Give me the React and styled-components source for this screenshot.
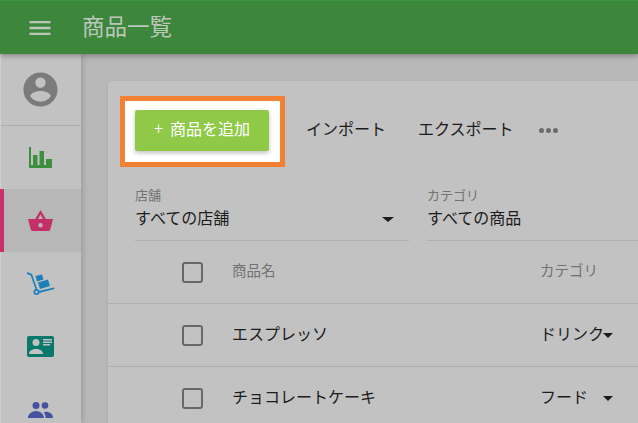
import React from 'react'
import styled, { createGlobalStyle } from 'styled-components'

const Global = createGlobalStyle`
    html, body {
        margin: 0;
        padding: 0;
        overflow: hidden;
    }
    body {
        font-family: Roboto, "Noto Sans CJK JP", sans-serif;
        color: #1c1c1c;
    }
`

const Frame = styled.div`
    width: 638px;
    height: 423px;
    display: flex;
    flex-direction: column;
    overflow: hidden;
    background: #b8b8b8;
`

const Header = styled.header`
    height: 54px;
    flex: none;
    display: flex;
    align-items: center;
    background: #3c873c;
    border-top: 1px solid #3a953c;
    box-sizing: border-box;
    padding-left: 26px;
    gap: 28px;
    box-shadow: 0 2px 5px rgba(0, 0, 0, 0.3);
    position: relative;
    z-index: 2;
`

const Title = styled.h1`
    margin: 0;
    padding-bottom: 5px;
    font-size: 22.5px;
    font-weight: 400;
    color: #bcc7bc;
`

const Body = styled.div`
    flex: 1;
    display: flex;
    min-height: 0;
`

const Sidebar = styled.nav`
    width: 81px;
    flex: none;
    background: #c2c2c2;
    border-left: 1px solid #cfcfcf;
    box-sizing: border-box;
    box-shadow: 2px 0 5px rgba(0, 0, 0, 0.15);
    position: relative;
    z-index: 1;
`

const Profile = styled.div`
    height: 72px;
    display: flex;
    align-items: center;
    justify-content: center;
    border-bottom: 1px solid #aeaeae;
    box-sizing: border-box;
    padding-right: 1px;
`

const NavItem = styled.div`
    height: 63px;
    display: flex;
    align-items: center;
    justify-content: center;
    background: ${(props) => (props.$active ? '#b7b7b7' : 'transparent')};
    border-left: 4px solid ${(props) => (props.$active ? '#c8316b' : 'transparent')};
    margin-left: -1px;
    padding-right: 4px;
`

const Main = styled.main`
    flex: 1;
    min-width: 0;
    padding: 27px 0 0 27px;
    overflow: hidden;
`

const Card = styled.section`
    width: 600px;
    background: #c2c2c2;
    border-radius: 4px 0 0 0;
    box-shadow: 0 1px 3px rgba(0, 0, 0, 0.12);
`

const Toolbar = styled.div`
    display: flex;
    align-items: center;
    padding: 15px 0 0 12px;
`

const Highlight = styled.div`
    width: 165px;
    height: 71px;
    box-sizing: border-box;
    border: 5px solid #f38133;
    background: #fff;
    padding: 9px 11px 11px 10px;
    margin-right: 21px;
`

const AddButton = styled.button`
    width: 100%;
    height: 41px;
    display: flex;
    align-items: center;
    justify-content: center;
    border: none;
    border-radius: 2px;
    background: #8fc947;
    color: #fff;
    font-family: inherit;
    font-size: 16px;
    padding: 0 0 5px 0;
    box-shadow: 0 2px 4px rgba(0, 0, 0, 0.25);
`

const Plus = styled.span`
    margin-right: 7px;
    font-weight: 300;
`

const TextAction = styled.span`
    font-size: 16px;
    margin-right: 32px;
    padding-bottom: 8px;
`

const Dots = styled.span`
    display: flex;
    gap: 2px;
    margin-left: -7px;
    padding-bottom: 2px;
`

const Dot = styled.i`
    width: 5px;
    height: 5px;
    border-radius: 50%;
    background: #6b6b6b;
`

const Filters = styled.div`
    display: flex;
    gap: 18px;
    padding: 21px 0 0 27px;
`

const Filter = styled.div`
    width: ${(props) => props.$width}px;
    height: 53px;
    box-sizing: border-box;
    border-bottom: 1px solid #aeaeae;
    position: relative;
    flex: none;
`

const FilterLabel = styled.div`
    font-size: 13px;
    line-height: 16px;
    color: #727272;
`

const FilterValue = styled.div`
    font-size: 16px;
    line-height: 22px;
    margin-top: 4px;
`

const Caret = styled.span`
    flex: none;
    width: 0;
    height: 0;
    border-left: 5px solid transparent;
    border-right: 5px solid transparent;
    border-top: 5px solid #1c1c1c;
`

const FilterCaret = styled(Caret)`
    position: absolute;
    right: 15px;
    top: 29px;
    border-left-width: 6px;
    border-right-width: 6px;
`

const Row = styled.div`
    height: ${(props) => props.$height}px;
    display: grid;
    grid-template-columns: 124px 308px 1fr;
    align-items: center;
    box-sizing: border-box;
    border-bottom: 1px solid #aeaeae;
`

const CheckCell = styled.div`
    display: flex;
    justify-content: flex-end;
    padding-right: 29px;
`

const Check = styled.span`
    width: 21px;
    height: 21px;
    box-sizing: border-box;
    border: 2px solid #686868;
    border-radius: 3px;
`

const HeadCell = styled.div`
    font-size: 14.5px;
    color: #727272;
    padding-bottom: 6px;
`

const Name = styled.div`
    font-size: 16px;
    padding-bottom: 5px;
`

const Category = styled.div`
    width: 73px;
    display: flex;
    align-items: center;
    justify-content: space-between;
    font-size: 16px;
`

const CategoryText = styled.span`
    min-width: 0;
    white-space: nowrap;
    padding-bottom: 4px;
`

const Icon = styled.svg`
    display: block;
`

const products = [
    { name: 'エスプレッソ', category: 'ドリンク' },
    { name: 'チョコレートケーキ', category: 'フード' },
]

const Menu = () => (
    <Icon width="28" height="28" viewBox="0 0 24 24" fill="#bcc7bc">
        <path d="M3 18h18v-2H3v2zm0-5h18v-2H3v2zm0-7v2h18V6H3z" />
    </Icon>
)

const Account = () => (
    <Icon width="41" height="41" viewBox="0 0 24 24" fill="#7b7b7b">
        <path d="M12 2C6.48 2 2 6.48 2 12s4.48 10 10 10 10-4.48 10-10S17.52 2 12 2zm0 3c1.66 0 3 1.34 3 3s-1.34 3-3 3-3-1.34-3-3 1.34-3 3-3zm0 14.2c-2.5 0-4.71-1.28-6-3.22.03-1.99 4-3.08 6-3.08 1.99 0 5.97 1.09 6 3.08-1.29 1.94-3.5 3.22-6 3.22z" />
    </Icon>
)

const Chart = () => (
    <Icon width="23" height="21" viewBox="0 0 23 21" fill="#3d8f40">
        <path d="M0 0h2v18h2V8h4.500v10h2V4H15v14h2v-6h6v9H0z" />
    </Icon>
)

const Basket = () => (
    <Icon width="25" height="21" viewBox="0 0 25 21" fill="#c2306a">
        <path fillRule="evenodd" d="M12.500 0l5.300 9H25l-2.700 10.500c-.2.900-1 1.500-1.900 1.500H4.600c-.9 0-1.700-.6-1.900-1.500L0 9h7.200zM10 9h5l-2.500-4.500zM12.500 13a2.200 2.200 0 1 0 0 4.400 2.200 2.200 0 0 0 0-4.400z" />
    </Icon>
)

const Dolly = () => (
    <Icon width="28" height="23" viewBox="0 0 28 23" fill="#1c80b8">
        <path d="M0 0l5 2 5.500 16-1.500.6L3.700 3.500 0 2z" />
        <path d="M8.500 4L15 2.500l1.500 5L10 9.500zM11 10.500l10-3 2 6.500-10 3z" />
        <path d="M11.500 19L27 15.500l.5 1.500L12 21z" />
        <path fillRule="evenodd" d="M9.500 17a3 3 0 1 0 0 6 3 3 0 0 0 0-6zm0 1.700a1.300 1.300 0 1 1 0 2.600 1.300 1.300 0 0 1 0-2.600z" />
    </Icon>
)

const IdCard = () => (
    <Icon width="27" height="21" viewBox="0 0 27 21">
        <rect width="27" height="21" rx="2" fill="#08796b" />
        <circle cx="9" cy="6.500" r="3.500" fill="#c2c2c2" />
        <path d="M2 18c0-3.500 3.600-5 7-5s7 1.500 7 5z" fill="#c2c2c2" />
        <path d="M16 3h9v1.500h-9zM16 5.500h9V7h-9zM16 8h7v1.500h-7z" fill="#c2c2c2" />
    </Icon>
)

const People = () => (
    <Icon width="25" height="16" viewBox="0 0 25 16" fill="#44529f">
        <circle cx="8" cy="3.500" r="3.500" />
        <circle cx="17" cy="3.500" r="3.300" />
        <path d="M0 16c0-4 4-7 8-7s8 3 8 7zM17.500 16c0-2.500-.6-4.300-1.800-5.800 3.500-1.600 9.300.5 9.300 5.800z" />
    </Icon>
)

const App = () => {
    return (
        <Frame>
            <Global />
            <Header>
                <Menu />
                <Title>商品一覧</Title>
            </Header>
            <Body>
                <Sidebar>
                    <Profile><Account /></Profile>
                    <NavItem><Chart /></NavItem>
                    <NavItem $active><Basket /></NavItem>
                    <NavItem><Dolly /></NavItem>
                    <NavItem><IdCard /></NavItem>
                    <NavItem><People /></NavItem>
                </Sidebar>
                <Main>
                    <Card>
                        <Toolbar>
                            <Highlight>
                                <AddButton><Plus>+</Plus>商品を追加</AddButton>
                            </Highlight>
                            <TextAction>インポート</TextAction>
                            <TextAction>エクスポート</TextAction>
                            <Dots><Dot /><Dot /><Dot /></Dots>
                        </Toolbar>
                        <Filters>
                            <Filter $width={274}>
                                <FilterLabel>店舗</FilterLabel>
                                <FilterValue>すべての店舗</FilterValue>
                                <FilterCaret />
                            </Filter>
                            <Filter $width={260}>
                                <FilterLabel>カテゴリ</FilterLabel>
                                <FilterValue>すべての商品</FilterValue>
                            </Filter>
                        </Filters>
                        <Row $height={63}>
                            <CheckCell><Check /></CheckCell>
                            <HeadCell>商品名</HeadCell>
                            <HeadCell>カテゴリ</HeadCell>
                        </Row>
                        {products.map((p) => (
                            <Row key={p.name} $height={63}>
                                <CheckCell><Check /></CheckCell>
                                <Name>{p.name}</Name>
                                <Category>
                                    <CategoryText>{p.category}</CategoryText>
                                    <Caret />
                                </Category>
                            </Row>
                        ))}
                    </Card>
                </Main>
            </Body>
        </Frame>
    )
}

export default App
